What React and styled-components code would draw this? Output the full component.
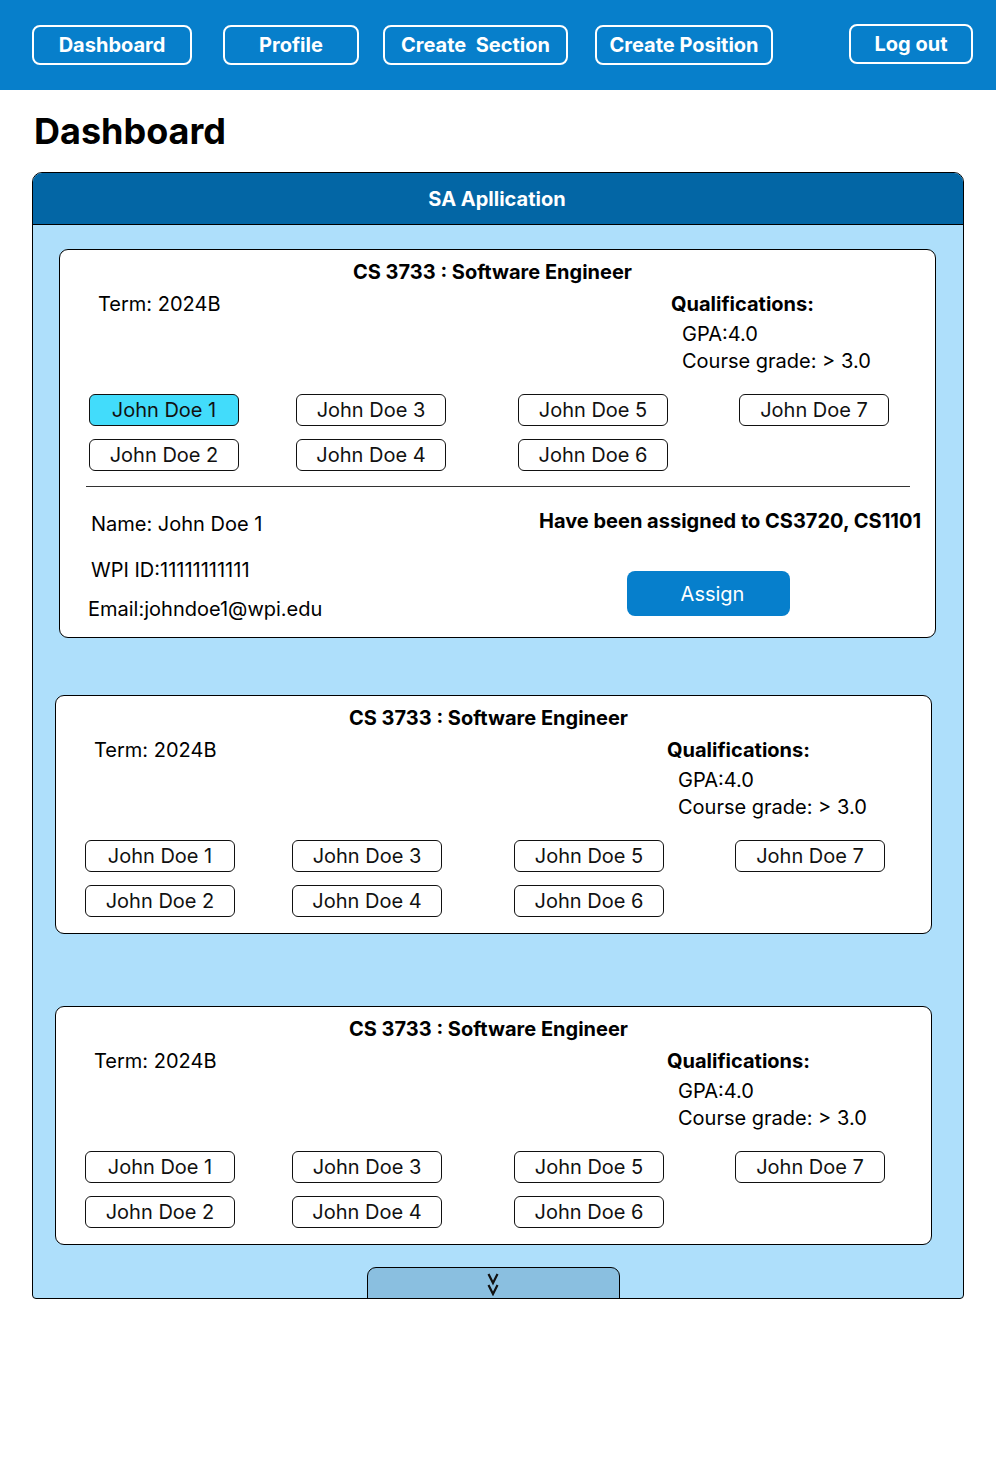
import styled, { createGlobalStyle } from 'styled-components'

const GlobalStyle = createGlobalStyle`
    body {
        margin: 0;
        background: #ffffff;
        font-family: Inter, "Liberation Sans", sans-serif;
        color: #000;
    }
`

const navItems = [
    { label: 'Dashboard', width: 160, gap: 32 },
    { label: 'Profile', width: 136, gap: 31 },
    { label: 'Create  Section', width: 185, gap: 24 },
    { label: 'Create Position', width: 178, gap: 27 },
]

const students = ['John Doe 1', 'John Doe 3', 'John Doe 5', 'John Doe 7', 'John Doe 2', 'John Doe 4', 'John Doe 6']

const Section = ({ expanded, offset, top }) => {
    return (
        <Card $offset={offset} $top={top}>
            <CardTitle>CS 3733 : Software Engineer</CardTitle>
            <InfoRow>
                <Term>Term: 2024B</Term>
                <Quals>
                    <QualTitle>Qualifications:</QualTitle>
                    <QualLine>GPA:4.0</QualLine>
                    <QualLine>Course grade: &gt; 3.0</QualLine>
                </Quals>
            </InfoRow>
            <StudentGrid>
                {students.map((s, i) => (
                    <StudentBtn key={s} $active={expanded && i === 0}>{s}</StudentBtn>
                ))}
            </StudentGrid>
            {expanded && (
                <>
                    <Divider />
                    <Details>
                        <DetailLeft>
                            <DetailLine>Name: John Doe 1</DetailLine>
                            <DetailLine $mt={23}>WPI ID:11111111111</DetailLine>
                            <DetailLine $mt={16} $shift={-3}>Email:johndoe1@wpi.edu</DetailLine>
                        </DetailLeft>
                        <DetailRight>
                            <Assigned>Have been assigned to CS3720, CS1101</Assigned>
                            <AssignBtn>Assign</AssignBtn>
                        </DetailRight>
                    </Details>
                </>
            )}
        </Card>
    )
}

const App = () => {
    return (
        <>
            <GlobalStyle />
            <NavBar>
                {navItems.map((n) => (
                    <NavButton key={n.label} $w={n.width} $gap={n.gap}>{n.label}</NavButton>
                ))}
                <NavButton $w={124} $gap={0} $right>Log out</NavButton>
            </NavBar>
            <PageTitle>Dashboard</PageTitle>
            <Panel>
                <PanelHeader>SA Apllication</PanelHeader>
                <PanelBody>
                    <Section expanded offset={26} top={24} />
                    <Section offset={22} top={57} />
                    <Section offset={22} top={72} />
                    <ScrollTab>
                        <svg width="14" height="24" viewBox="0 0 14 24" fill="none" stroke="#111" strokeWidth="2.2">
                            <path d="M2.5 2 L7 11 L11.5 2" />
                            <path d="M2.5 13 L7 22 L11.5 13" />
                        </svg>
                    </ScrollTab>
                </PanelBody>
            </Panel>
        </>
    )
}
export default App

const NavBar = styled.div`
    height: 90px;
    background: #077fcb;
    display: flex;
    align-items: center;
    padding-right: 23px;
    box-sizing: border-box;
`

const NavButton = styled.button`
    width: ${(p) => p.$w}px;
    height: 40px;
    margin-left: ${(p) => (p.$right ? 'auto' : `${p.$gap}px`)};
    margin-top: ${(p) => (p.$right ? '-2px' : '0')};
    border: 2px solid #ffffff;
    border-radius: 8px;
    background: transparent;
    color: #ffffff;
    font-family: Inter, "Liberation Sans", sans-serif;
    font-weight: 700;
    font-size: 20px;
    white-space: pre;
    padding: 0;
`

const PageTitle = styled.h1`
    margin: 19px 0 19px 34px;
    font-size: 36px;
    line-height: 44px;
    font-weight: 700;
`

const Panel = styled.div`
    margin-left: 32px;
    width: 932px;
    box-sizing: border-box;
    border: 1px solid #000;
    border-radius: 10px 10px 4px 4px;
    overflow: hidden;
    background: #aedffb;
`

const PanelHeader = styled.div`
    height: 51px;
    background: #0366a5;
    border-bottom: 1px solid #000;
    color: #fff;
    font-weight: 700;
    font-size: 20px;
    display: flex;
    align-items: center;
    justify-content: center;
    padding-right: 2px;
`

const PanelBody = styled.div`
    display: flex;
    flex-direction: column;
    align-items: flex-start;
`

const Card = styled.div`
    width: 877px;
    box-sizing: border-box;
    margin-left: ${(p) => p.$offset}px;
    margin-top: ${(p) => p.$top}px;
    background: #fff;
    border: 1px solid #000;
    border-radius: 9px;
    padding: 11px 0 16px;
    display: flex;
    flex-direction: column;
`

const CardTitle = styled.div`
    text-align: center;
    font-weight: 700;
    font-size: 20px;
    line-height: 23px;
    padding-right: 10px;
`

const InfoRow = styled.div`
    display: grid;
    grid-template-columns: 573px 1fr;
    margin-top: 9px;
    padding-left: 38px;
    font-size: 20px;
`

const Term = styled.div`
    line-height: 23px;
`

const Quals = styled.div`
    display: flex;
    flex-direction: column;
`

const QualTitle = styled.div`
    font-weight: 700;
    line-height: 23px;
    margin-bottom: 5px;
`

const QualLine = styled.div`
    line-height: 27px;
    padding-left: 11px;
`

const StudentGrid = styled.div`
    display: grid;
    grid-template-columns: 207px 222px 221px 150px;
    row-gap: 13px;
    margin-top: 19px;
    padding-left: 29px;
`

const StudentBtn = styled.button`
    width: 150px;
    height: 32px;
    box-sizing: border-box;
    border: 1px solid #111;
    border-radius: 6px;
    background: ${(p) => (p.$active ? '#42dcfb' : '#fff')};
    font-family: Inter, "Liberation Sans", sans-serif;
    font-size: 20px;
    color: #111;
    padding: 0;
`

const Divider = styled.div`
    height: 1px;
    background: #333;
    margin: 15px 25px 0 26px;
`

const Details = styled.div`
    display: grid;
    grid-template-columns: 448px 1fr;
    padding-left: 31px;
    font-size: 20px;
`

const DetailLeft = styled.div`
    display: flex;
    flex-direction: column;
    padding-top: 26px;
`

const DetailLine = styled.div`
    line-height: 23px;
    margin-top: ${(p) => p.$mt || 0}px;
    margin-left: ${(p) => p.$shift || 0}px;
`

const DetailRight = styled.div`
    display: flex;
    flex-direction: column;
    padding-top: 23px;
`

const Assigned = styled.div`
    font-weight: 700;
    line-height: 23px;
    white-space: nowrap;
`

const AssignBtn = styled.button`
    margin-top: 38px;
    margin-left: 88px;
    width: 163px;
    height: 45px;
    border: none;
    border-radius: 8px;
    background: #067fcc;
    color: #fff;
    font-family: Inter, "Liberation Sans", sans-serif;
    font-size: 20px;
    padding: 0 0 0 8px;
`

const ScrollTab = styled.div`
    align-self: center;
    margin: 22px 0 -1px -10px;
    width: 253px;
    height: 32px;
    box-sizing: border-box;
    background: #8abfe0;
    border: 1px solid #000;
    border-radius: 9px 9px 0 0;
    display: flex;
    justify-content: center;
    align-items: flex-end;
    padding-bottom: 2px;
`
